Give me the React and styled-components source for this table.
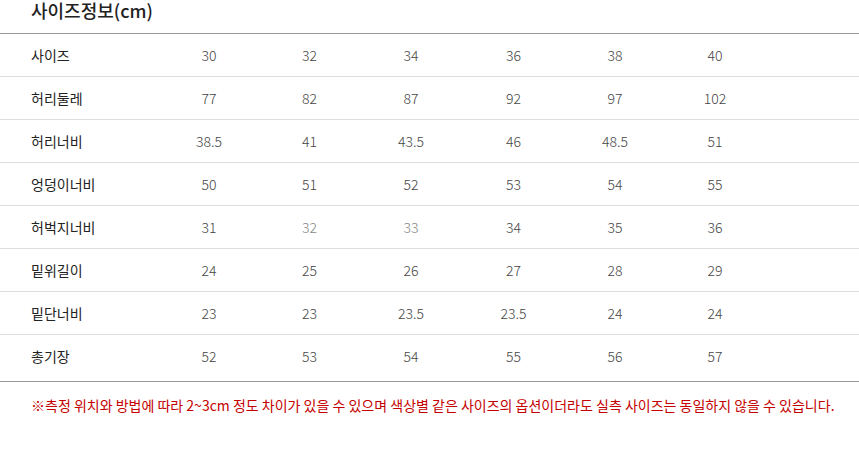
import React from "react";
import styled, { createGlobalStyle } from "styled-components";

const GlobalStyle = createGlobalStyle`
  body {
    margin: 0;
    background: #fff;
    font-family: "Noto Sans CJK KR", "Noto Sans", sans-serif;
  }
`;

const Wrapper = styled.div`
  width: 859px;
  height: 454px;
  overflow: hidden;
`;

const Title = styled.h2`
  margin: 0;
  padding: 0 0 0 31px;
  height: 33px;
  font-size: 18px;
  font-weight: 500;
  line-height: 21px;
  color: #222;
`;

const Table = styled.div`
  border-top: 1px solid #999;
  border-bottom: 1px solid #999;
`;

const Row = styled.div`
  display: grid;
  grid-template-columns: 159px 100px 101px 102px 103px 100px 100px 1fr;
  align-items: center;
  height: 42px;
  padding-bottom: ${(props) => (props.last ? "4px" : "0")};
  border-top: ${(props) => (props.first ? "none" : "1px solid #ddd")};
`;

const Label = styled.div`
  padding-left: 31px;
  font-size: 14px;
  color: #222;
`;

const Cell = styled.div`
  text-align: center;
  font-size: 14px;
  font-weight: 300;
  color: ${(props) => (props.faint ? "#888" : "#444")};
`;

const Note = styled.p`
  margin: 13px 0 0 31px;
  font-size: 14px;
  color: #c40000;
`;

const rows = [
  { label: "사이즈", values: ["30", "32", "34", "36", "38", "40"] },
  { label: "허리둘레", values: ["77", "82", "87", "92", "97", "102"] },
  { label: "허리너비", values: ["38.5", "41", "43.5", "46", "48.5", "51"] },
  { label: "엉덩이너비", values: ["50", "51", "52", "53", "54", "55"] },
  { label: "허벅지너비", values: ["31", "32", "33", "34", "35", "36"], faint: [1, 2] },
  { label: "밑위길이", values: ["24", "25", "26", "27", "28", "29"] },
  { label: "밑단너비", values: ["23", "23", "23.5", "23.5", "24", "24"] },
  { label: "총기장", values: ["52", "53", "54", "55", "56", "57"] },
];

const App = () => {
  return (
    <Wrapper>
      <GlobalStyle />
      <Title>사이즈정보(cm)</Title>
      <Table>
        {rows.map((row, i) => (
          <Row key={row.label} first={i === 0} last={i === rows.length - 1}>
            <Label>{row.label}</Label>
            {row.values.map((v, j) => (
              <Cell key={j} faint={row.faint && row.faint.includes(j)}>
                {v}
              </Cell>
            ))}
            <div />
          </Row>
        ))}
      </Table>
      <Note>
        ※측정 위치와 방법에 따라 2~3cm 정도 차이가 있을 수 있으며 색상별 같은 사이즈의 옵션이더라도 실측 사이즈는 동일하지 않을 수 있습니다.
      </Note>
    </Wrapper>
  );
};

export default App;
